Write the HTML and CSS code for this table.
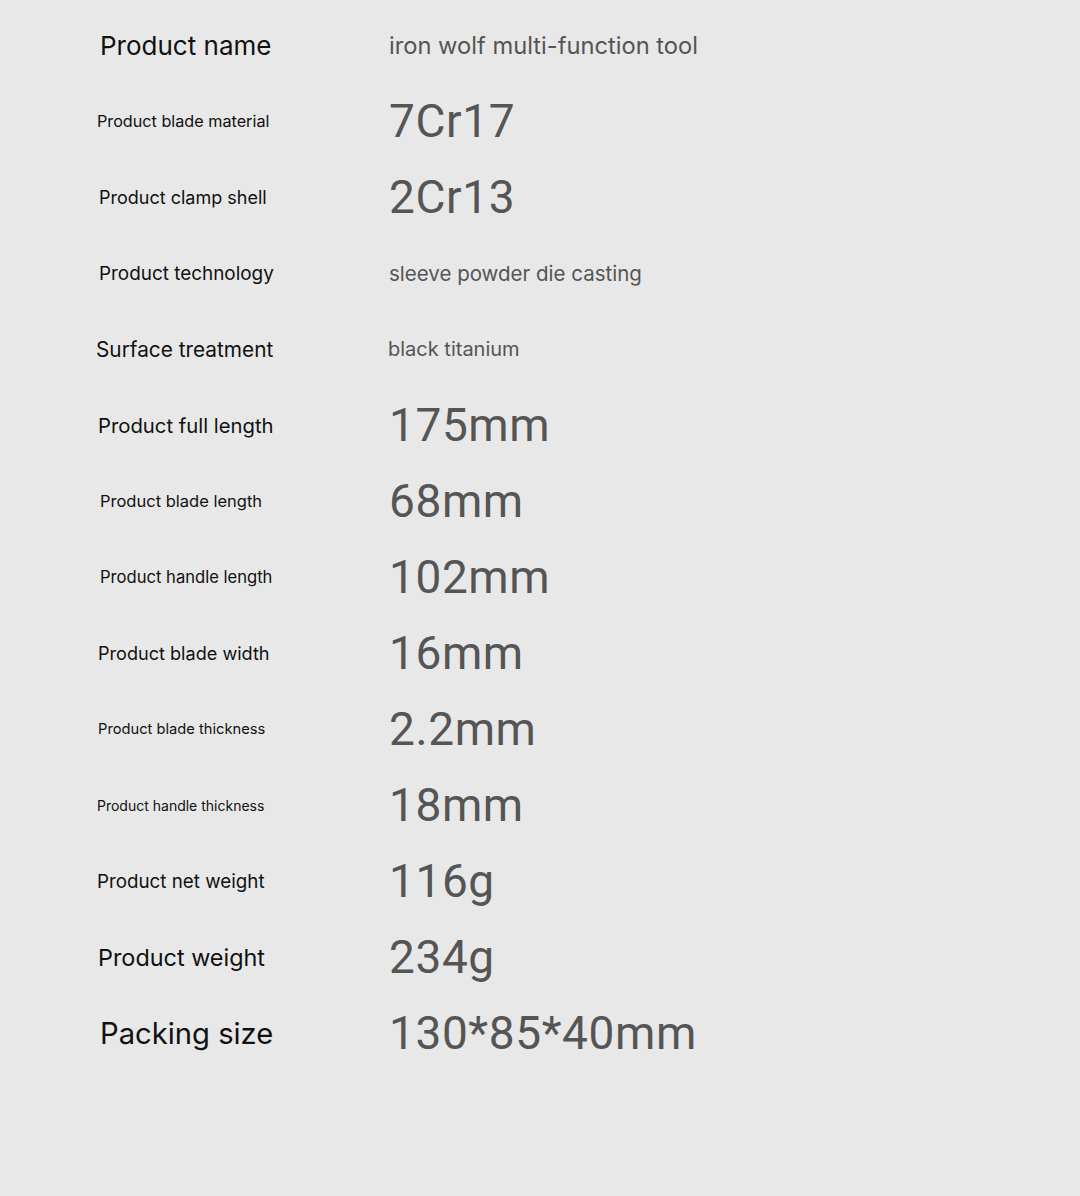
FILE: index.html
```html
<!DOCTYPE html>
<html>
<head>
<meta charset="utf-8">
<link rel="stylesheet" href="styles.css">
</head>
<body>
<div class="page">
  <div class="specs">
    <div class="row"><div class="label l1">Product name</div><div class="value text t1">iron wolf multi-function tool</div></div>
    <div class="row"><div class="label l2">Product blade material</div><div class="value big">7Cr17</div></div>
    <div class="row"><div class="label l3">Product clamp shell</div><div class="value big">2Cr13</div></div>
    <div class="row"><div class="label l4">Product technology</div><div class="value text t2">sleeve powder die casting</div></div>
    <div class="row"><div class="label l5">Surface treatment</div><div class="value text t3">black titanium</div></div>
    <div class="row"><div class="label l6">Product full length</div><div class="value big">175mm</div></div>
    <div class="row"><div class="label l7">Product blade length</div><div class="value big">68mm</div></div>
    <div class="row"><div class="label l8">Product handle length</div><div class="value big">102mm</div></div>
    <div class="row"><div class="label l9">Product blade width</div><div class="value big">16mm</div></div>
    <div class="row"><div class="label l10">Product blade thickness</div><div class="value big">2.2mm</div></div>
    <div class="row"><div class="label l11">Product handle thickness</div><div class="value big">18mm</div></div>
    <div class="row"><div class="label l12">Product net weight</div><div class="value big">116g</div></div>
    <div class="row"><div class="label l13">Product weight</div><div class="value big">234g</div></div>
    <div class="row"><div class="label l14">Packing size</div><div class="value big">130*85*40mm</div></div>
  </div>
</div>
</body>
</html>
```
FILE: styles.css
```css
html, body {
  margin: 0;
  padding: 0;
}
body {
  background: #e8e8e8;
  font-family: Inter, Roboto, sans-serif;
}
.page {
  height: 1193px;
  border-bottom: 3px solid #f3f3f3;
  padding-top: 7px;
  box-sizing: content-box;
}
.specs {
  display: flex;
  flex-direction: column;
  padding-left: 96px;
}
.row {
  height: 76px;
  display: flex;
  align-items: center;
}
.label {
  width: 292px;
  flex: none;
  box-sizing: border-box;
  color: #111;
  white-space: nowrap;
}
.value {
  color: #555;
  white-space: nowrap;
  padding-left: 1px;
}
.t1 { font-size: 23.7px; }
.t2 { font-size: 20.5px; }
.t3 { font-size: 20px; padding-left: 0; }
.big {
  font-family: Roboto, sans-serif;
  font-size: 46px;
  letter-spacing: 0.6px;
}
.l1 { font-size: 26px; padding-left: 4px; }
.l2 { font-size: 16.2px; padding-left: 1px; }
.l3 { font-size: 18px; padding-left: 3px; }
.l4 { font-size: 18.9px; padding-left: 3px; }
.l5 { font-size: 20.8px; }
.l6 { font-size: 20.3px; padding-left: 2px; }
.l7 { font-size: 16.5px; padding-left: 4px; }
.l8 { font-size: 16.6px; padding-left: 4px; }
.l9 { font-size: 18.1px; padding-left: 2px; }
.l10 { font-size: 14.7px; padding-left: 2px; }
.l11 { font-size: 14px; padding-left: 1px; }
.l12 { font-size: 18.8px; padding-left: 1px; }
.l13 { font-size: 23.4px; padding-left: 2px; }
.l14 { font-size: 29.2px; padding-left: 4px; }
```
